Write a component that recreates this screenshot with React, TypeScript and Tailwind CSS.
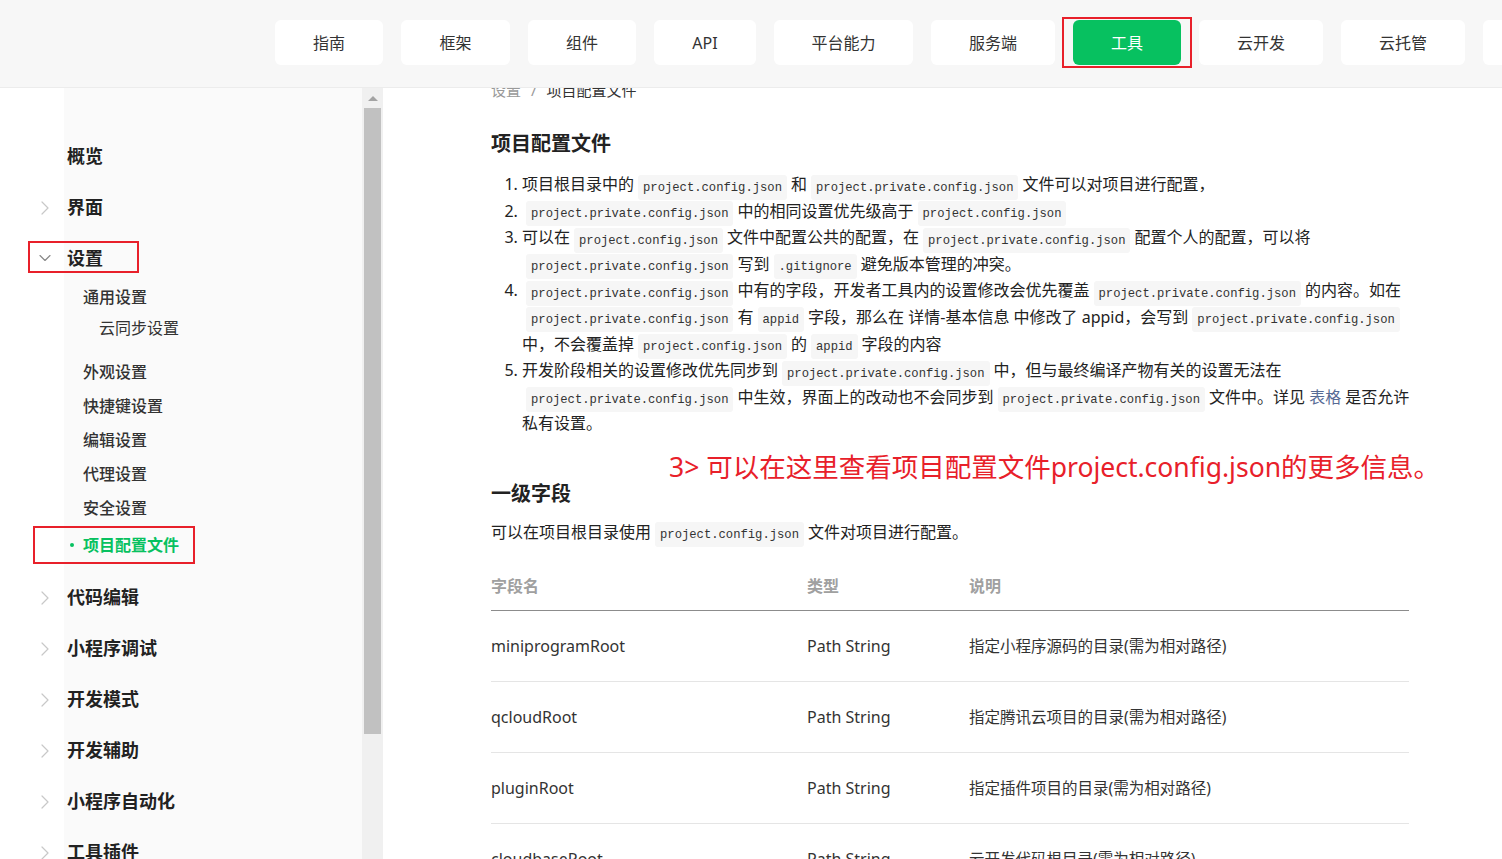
import React from "react";
import { ChevronRight, ChevronDown } from "lucide-react";

const navItems = [
  { label: "指南", w: "w-[108px]" },
  { label: "框架", w: "w-[109px]" },
  { label: "组件", w: "w-[108px]" },
  { label: "API", w: "w-[102px]" },
  { label: "平台能力", w: "w-[139px]" },
  { label: "服务端", w: "w-[124px]" },
  { label: "工具", w: "w-[108px]" },
  { label: "云开发", w: "w-[124px]" },
  { label: "云托管", w: "w-[124px]" },
  { label: "小游戏", w: "w-[124px]" },
];

const rows = [
  { name: "miniprogramRoot", type: "Path String", desc: "指定小程序源码的目录(需为相对路径)" },
  { name: "qcloudRoot", type: "Path String", desc: "指定腾讯云项目的目录(需为相对路径)" },
  { name: "pluginRoot", type: "Path String", desc: "指定插件项目的目录(需为相对路径)" },
  { name: "cloudbaseRoot", type: "Path String", desc: "云开发代码根目录(需为相对路径)" },
];

const sans = "font-['Noto_Sans','Noto_Sans_CJK_SC',sans-serif]";

function Code({ children }: { children: React.ReactNode }) {
  return (
    <code className="mx-[4px] rounded-[3px] bg-[#f6f6f6] px-[5px] py-[5.5px] align-baseline font-['Liberation_Mono','DejaVu_Sans_Mono',monospace] text-[12.2px] leading-none text-[#333]">
      {children}
    </code>
  );
}

function TopItem({ label, open }: { label: string; open?: boolean }) {
  return (
    <div className="flex h-[51px] items-center">
      <span className="flex w-[67px] items-center pl-[33px]">
        {open ? (
          <ChevronDown size={20} strokeWidth={1.4} className="ml-[2px] text-[#888]" />
        ) : (
          <ChevronRight size={24} strokeWidth={1.2} className="text-[#c8c8c8]" />
        )}
      </span>
      <span className="text-[18px] font-bold text-[#222]">{label}</span>
    </div>
  );
}

function SubItem({ label }: { label: string }) {
  return (
    <div className="flex h-[34px] items-center pl-[83px] text-[16px] font-medium text-[#333]">{label}</div>
  );
}

export default function App() {
  const P = "project.private.config.json";
  const C = "project.config.json";
  return (
    <div className={`flex h-[859px] w-[1502px] flex-col overflow-hidden bg-white ${sans}`}>
      {/* top nav */}
      <header className="h-[88px] shrink-0 overflow-hidden border-b border-[#ececec] bg-[#f7f7f7]">
        <div className="flex gap-[18px] pl-[275px] pt-[20px]">
          {navItems.map((n) => {
            const active = n.label === "工具";
            return (
              <div
                key={n.label}
                className={`relative flex h-[45px] shrink-0 items-center justify-center rounded-[6px] text-[16px] ${n.w} ${
                  active ? "bg-[#07c160] text-white" : "bg-white text-[#333]"
                }`}
              >
                {n.label}
                {active && (
                  <span className="absolute -top-[3px] -bottom-[3px] -left-[11px] -right-[11px] border-2 border-[#e8202a]" />
                )}
              </div>
            );
          })}
        </div>
      </header>

      <div className="flex min-h-0 flex-1">
        {/* sidebar */}
        <aside className="flex w-[383px] shrink-0">
          <div className="w-[362px] bg-[linear-gradient(to_right,#ffffff_64px,#fafafa_64px)] pt-[42px]">
            <div className="flex h-[52px] items-center pl-[67px] text-[18px] font-bold text-[#222]">概览</div>
            <TopItem label="界面" />
            <div className="relative">
              <div className="flex h-[50px] items-center">
                <span className="flex w-[67px] items-center pl-[35px]">
                  <ChevronDown size={20} strokeWidth={1.4} className="text-[#888]" />
                </span>
                <span className="text-[18px] font-bold text-[#222]">设置</span>
              </div>
              <span className="absolute left-[28px] top-[8px] h-[32px] w-[111px] border-2 border-[#e8202a]" />
            </div>
            <div className="flex h-[28px] items-center pl-[83px] text-[16px] font-medium text-[#333]">通用设置</div>
            <div className="flex h-[34px] items-center pl-[99px] text-[16px] text-[#333]">云同步设置</div>
            <div className="h-[10px]" />
            <SubItem label="外观设置" />
            <SubItem label="快捷键设置" />
            <SubItem label="编辑设置" />
            <SubItem label="代理设置" />
            <SubItem label="安全设置" />
            <div className="h-[1px]" />
            <div className="relative flex h-[38px] items-center pl-[70px] text-[16px] font-bold text-[#07c160]">
              <span className="mr-[9px] h-[4px] w-[4px] rounded-full bg-[#07c160]" />
              项目配置文件
              <span className="absolute left-[33px] top-0 h-[38px] w-[162px] border-2 border-[#e8202a]" />
            </div>
            <div className="h-[8px]" />
            <TopItem label="代码编辑" />
            <TopItem label="小程序调试" />
            <TopItem label="开发模式" />
            <TopItem label="开发辅助" />
            <TopItem label="小程序自动化" />
            <TopItem label="工具插件" />
          </div>
          {/* scrollbar */}
          <div className="flex w-[21px] flex-col items-center bg-[#f0f0f0]">
            <div className="mt-[8px] h-0 w-0 border-x-[5px] border-b-[5px] border-x-transparent border-b-[#a3a3a3]" />
            <div className="mt-[7px] h-[626px] w-[17px] bg-[#c1c1c1]" />
          </div>
        </aside>

        {/* content */}
        <main className="min-w-0 flex-1 overflow-hidden pl-[108px]">
          <div className="w-[918px] text-[#333]">
            <div className="-mt-[8px] flex h-[20px] items-center gap-[10px] text-[15px]">
              <span className="text-[#999]">设置</span>
              <span className="text-[#999]">/</span>
              <span className="text-[#333]">项目配置文件</span>
            </div>

            <h1 className="mt-[30px] flex h-[28px] items-center text-[20px] font-bold text-[#222]">项目配置文件</h1>

            <ol className="mt-[13px] list-decimal pl-[31px] text-[16px] leading-[26.6px] text-[#222]">
              <li className="whitespace-nowrap">
                项目根目录中的<Code>{C}</Code>和<Code>{P}</Code>文件可以对项目进行配置，
              </li>
              <li className="whitespace-nowrap">
                <Code>{P}</Code>中的相同设置优先级高于<Code>{C}</Code>
              </li>
              <li className="whitespace-nowrap">
                可以在<Code>{C}</Code>文件中配置公共的配置，在<Code>{P}</Code>配置个人的配置，可以将
                <br />
                <Code>{P}</Code>写到<Code>.gitignore</Code>避免版本管理的冲突。
              </li>
              <li className="whitespace-nowrap">
                <Code>{P}</Code>中有的字段，开发者工具内的设置修改会优先覆盖<Code>{P}</Code>的内容。如在
                <br />
                <Code>{P}</Code>有<Code>appid</Code>字段，那么在 详情-基本信息 中修改了 appid，会写到<Code>{P}</Code>
                <br />
                中，不会覆盖掉<Code>{C}</Code>的<Code>appid</Code>字段的内容
              </li>
              <li className="whitespace-nowrap">
                开发阶段相关的设置修改优先同步到<Code>{P}</Code>中，但与最终编译产物有关的设置无法在
                <br />
                <Code>{P}</Code>中生效，界面上的改动也不会同步到<Code>{P}</Code>文件中。详见 <span className="text-[#576b95]">表格</span> 是否允许
                <br />
                私有设置。
              </li>
            </ol>

            <div className="relative">
              <span className="absolute left-[178px] top-[15px] whitespace-nowrap text-[26.5px] leading-[30px] text-[#e8202a]">
                3&gt; 可以在这里查看项目配置文件project.config.json的更多信息。
              </span>
            </div>

            <h2 className="mt-[43px] flex h-[28px] items-center text-[20px] font-bold text-[#222]">一级字段</h2>

            <p className="mt-[11px] text-[16px] leading-[26px] text-[#222]">
              可以在项目根目录使用<Code>{C}</Code>文件对项目进行配置。
            </p>

            <table className="mt-[17px] w-full border-collapse text-left">
              <thead>
                <tr className="h-[49px] border-b border-[#8c8c8c] text-[16px] font-bold text-[#a0a0a0]">
                  <th className="w-[316px] font-bold">字段名</th>
                  <th className="w-[162px] font-bold">类型</th>
                  <th className="font-bold">说明</th>
                </tr>
              </thead>
              <tbody>
                {rows.map((r) => (
                  <tr key={r.name} className="h-[71px] border-b border-[#e5e5e5] text-[#333]">
                    <td className="text-[16px]">{r.name}</td>
                    <td className="text-[16px]">{r.type}</td>
                    <td className="text-[15.5px]">{r.desc}</td>
                  </tr>
                ))}
              </tbody>
            </table>
          </div>
        </main>
      </div>
    </div>
  );
}
